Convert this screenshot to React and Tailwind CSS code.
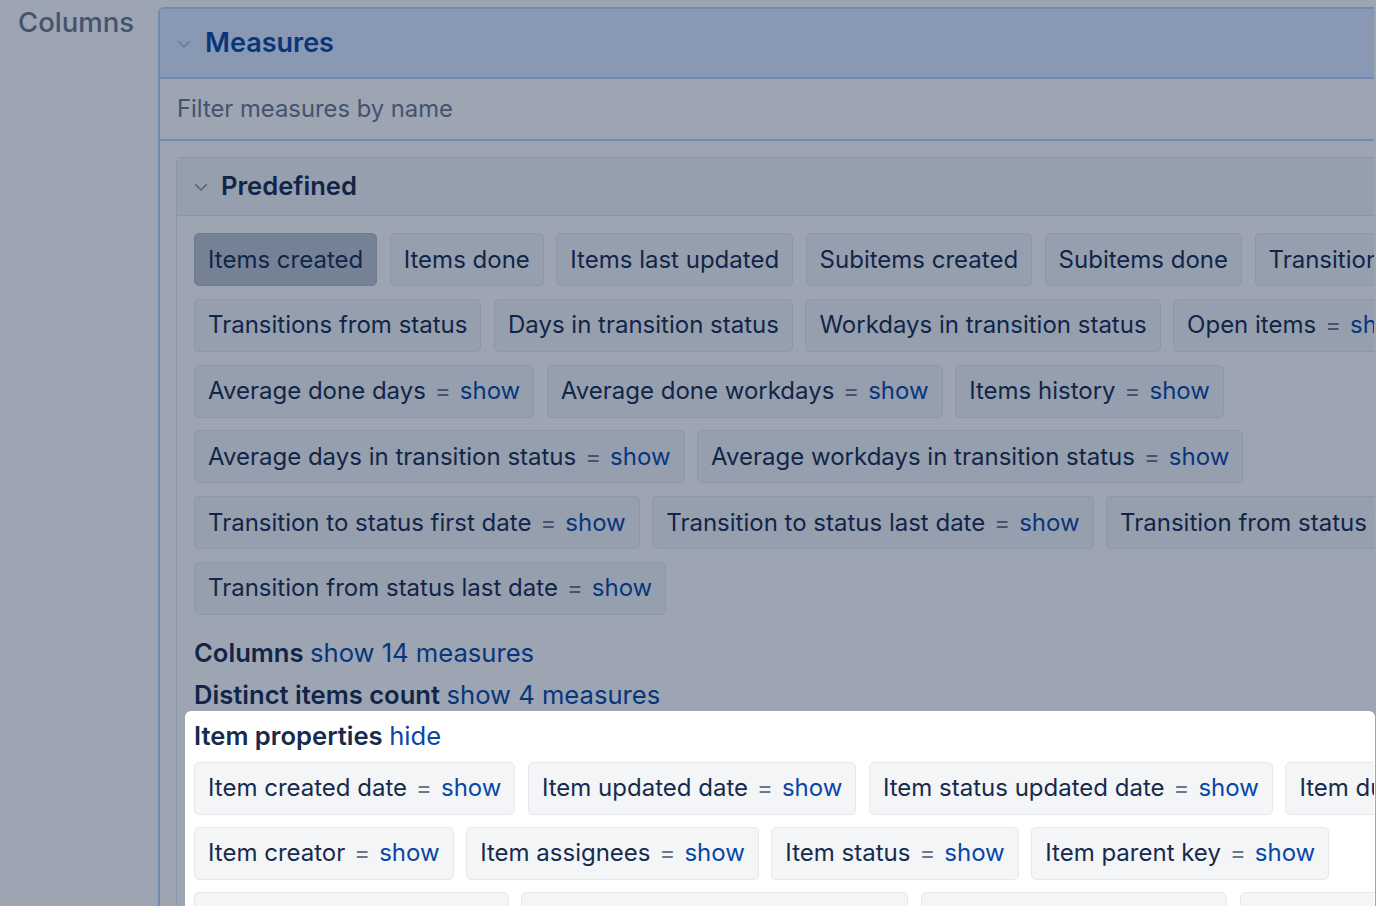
import React from 'react';

const predefinedRows = [
  [
    { label: 'Items created', selected: true },
    { label: 'Items done' },
    { label: 'Items last updated' },
    { label: 'Subitems created' },
    { label: 'Subitems done' },
    { label: 'Transitions to status' },
  ],
  [
    { label: 'Transitions from status' },
    { label: 'Days in transition status' },
    { label: 'Workdays in transition status' },
    { label: 'Open items', show: true },
  ],
  [
    { label: 'Average done days', show: true },
    { label: 'Average done workdays', show: true },
    { label: 'Items history', show: true },
  ],
  [
    { label: 'Average days in transition status', show: true },
    { label: 'Average workdays in transition status', show: true },
  ],
  [
    { label: 'Transition to status first date', show: true },
    { label: 'Transition to status last date', show: true },
    { label: 'Transition from status first date', show: true },
  ],
  [{ label: 'Transition from status last date', show: true }],
];

const propertyRows = [
  [
    { label: 'Item created date', show: true },
    { label: 'Item updated date', show: true },
    { label: 'Item status updated date', show: true },
    { label: 'Item due date', show: true },
  ],
  [
    { label: 'Item creator', show: true },
    { label: 'Item assignees', show: true },
    { label: 'Item status', show: true },
    { label: 'Item parent key', show: true },
  ],
  [
    { label: 'Item started date', show: true },
    { label: 'Item last transition date', show: true },
    { label: 'Item priority key', show: true },
    { label: 'Item labels', show: true },
  ],
];

const Chevron = ({ className }) => (
  <svg width="14" height="9" viewBox="0 0 14 9" fill="none" className={className}>
    <path d="M1.5 1.5 L7 7 L12.5 1.5" stroke="currentColor" strokeWidth="1.6" strokeLinecap="round" strokeLinejoin="round" />
  </svg>
);

const Chip = ({ label, show, selected }) => (
  <div
    className={`shrink-0 h-[53px] flex items-center px-[13px] rounded-[5px] border whitespace-nowrap ${
      selected ? 'bg-[#bcc3cd] border-[#b3bac5]' : 'bg-[#f4f5f7] border-[#e6e8ec]'
    }`}
  >
    <span className="text-[#172b4d]">{label}</span>
    {show && (
      <>
        <span className="mx-[9px] text-[#6b778c]">=</span>
        <span className="text-[#0747a6]">show</span>
      </>
    )}
  </div>
);

const ChipRows = ({ rows, gapY }) => (
  <div className={`flex flex-col ${gapY}`}>
    {rows.map((row, i) => (
      <div key={i} className="flex gap-x-[12.5px]">
        {row.map((c) => (
          <Chip key={c.label} {...c} />
        ))}
      </div>
    ))}
  </div>
);

export default function App() {
  return (
    <div className="relative w-[1376px] h-[906px] overflow-hidden bg-white flex font-['Inter','Noto_Sans',sans-serif] text-[24px] text-[#172b4d]">
      {/* left label column */}
      <div className="w-[158px] shrink-0 pl-[18px] pt-[3px]">
        <div className="text-[27.5px] font-medium text-[#6b778c] leading-[38px]">Columns</div>
      </div>

      {/* measures panel, clipped on the right */}
      <div className="w-[1216px] shrink-0 overflow-hidden pt-[7px]">
        <div className="w-[1400px] border-l-2 border-t-2 border-[#b3d4ff] rounded-tl-[6px] min-h-[900px]">
          <div className="h-[70px] bg-[#deebff] border-b-2 border-[#b3d4ff] flex items-center pl-[17px]">
            <Chevron className="text-[#a5b8d6] mt-[2px]" />
            <span className="ml-[14px] text-[27px] font-semibold text-[#0747a6]">Measures</span>
          </div>
          <div className="h-[62px] border-b-2 border-[#b3d4ff] flex items-center pl-[17px] text-[23.8px] text-[#6b778c]">
            Filter measures by name
          </div>

          <div className="pt-[16px] pl-[16px]">
            <div className="border-l border-t border-[#e3e6eb] rounded-tl-[5px]">
              <div className="h-[58px] bg-[#f4f5f7] border-b border-[#e3e6eb] flex items-center pl-[17px]">
                <Chevron className="text-[#8993a4] mt-[2px]" />
                <span className="ml-[13px] text-[25.6px] font-semibold">Predefined</span>
              </div>
              <div className="pl-[17px] pt-[17px]">
                <ChipRows rows={predefinedRows} gapY="gap-y-[12.8px]" />

                <div className="text-[25.6px]">
                  <div className="mt-[17px] leading-[42px] font-semibold">
                    Columns <span className="font-normal text-[#0747a6]">show 14 measures</span>
                  </div>
                  <div className="leading-[42px] font-semibold">
                    Distinct items count <span className="font-normal text-[#0747a6]">show 4 measures</span>
                  </div>
                  <div className="leading-[40px] font-semibold">
                    Item properties <span className="font-normal text-[#0747a6]">hide</span>
                  </div>
                </div>
                <div className="mt-[6px]">
                  <ChipRows rows={propertyRows} gapY="gap-y-[12px]" />
                </div>
              </div>
            </div>
          </div>
        </div>
      </div>

      {/* onboarding spotlight overlay */}
      <div className="pointer-events-none absolute left-[185px] top-[711px] right-[1px] bottom-[-20px] rounded-[6px] shadow-[0_0_0_3000px_rgba(9,30,66,0.4)]" />
    </div>
  );
}
